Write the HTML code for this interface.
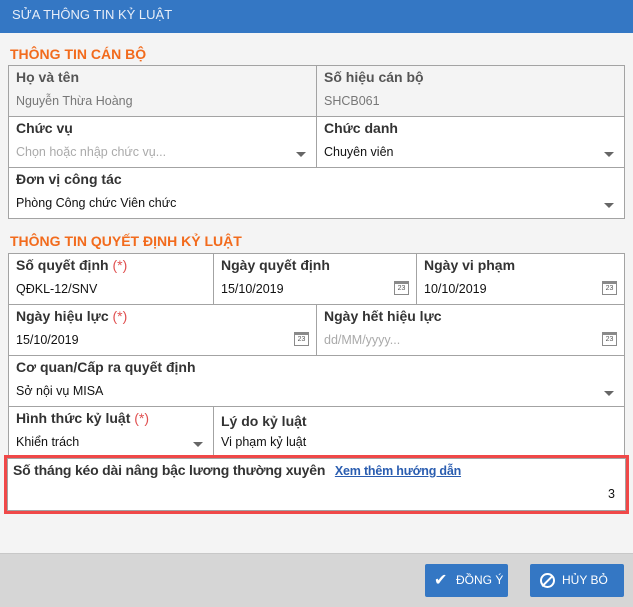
<!DOCTYPE html>
<html style="width:633px;height:607px;overflow:hidden"><head><meta charset="utf-8"><style>
*{box-sizing:border-box;margin:0;padding:0}
body{width:633px;height:607px;background:#f4f4f4;font-family:"Liberation Sans",Arial,sans-serif;position:relative;overflow:hidden;color:#222;white-space:nowrap}
.hd{position:absolute;left:0;top:0;width:633px;height:33px;background:#3477c4;color:#e8eef8;font-size:13px;line-height:30px;padding-left:12px}
.st{position:absolute;left:10px;color:#f26b1d;font-weight:bold;font-size:14px}
.c{position:absolute;border:1px solid #a3a3a3;background:#fff}
.c.g{background:#f4f4f4}
.l{position:absolute;left:7px;top:3px;font-weight:bold;font-size:14px;color:#333}
.v{position:absolute;left:7px;top:28px;font-size:12.5px;color:#111}
.g .l{color:#555}.g .v{color:#777}
.ph{color:#aaa!important}
.r{color:#e05050;font-weight:normal}
.ar{position:absolute;right:10px;top:35px;width:0;height:0;border-left:5px solid transparent;border-right:5px solid transparent;border-top:5px solid #666}
.cal{position:absolute;right:7px;top:27px;width:15px;height:14px;border:1px solid #8a8a8a;border-top:3px solid #8a8a8a;font-size:7px;color:#555;text-align:center;line-height:9px;background:#fff}
.ft{position:absolute;left:0;top:553px;width:633px;height:54px;background:#d6d6d6;border-top:1px solid #c8c8c8}
.b{position:absolute;top:564px;height:33px;background:#3477c4;color:#fff;font-size:12px;line-height:33px;border-radius:2px;overflow:hidden}
</style></head><body>
<div class="hd">SỬA THÔNG TIN KỶ LUẬT</div>
<div class="st" style="top:46px">THÔNG TIN CÁN BỘ</div>
<div class="c g" style="left:8px;top:65px;width:309px;height:52px"><div class="l">Họ và tên</div><div class="v">Nguyễn Thừa Hoàng</div></div>
<div class="c g" style="left:316px;top:65px;width:309px;height:52px"><div class="l">Số hiệu cán bộ</div><div class="v">SHCB061</div></div>
<div class="c" style="left:8px;top:116px;width:309px;height:52px"><div class="l">Chức vụ</div><div class="v ph">Chọn hoặc nhập chức vụ...</div><div class="ar"></div></div>
<div class="c" style="left:316px;top:116px;width:309px;height:52px"><div class="l">Chức danh</div><div class="v">Chuyên viên</div><div class="ar"></div></div>
<div class="c" style="left:8px;top:167px;width:617px;height:52px"><div class="l">Đơn vị công tác</div><div class="v">Phòng Công chức Viên chức</div><div class="ar"></div></div>
<div class="st" style="top:233px">THÔNG TIN QUYẾT ĐỊNH KỶ LUẬT</div>
<div class="c" style="left:8px;top:253px;width:206px;height:52px"><div class="l">Số quyết định <span class="r">(*)</span></div><div class="v">QĐKL-12/SNV</div></div>
<div class="c" style="left:213px;top:253px;width:204px;height:52px"><div class="l">Ngày quyết định</div><div class="v">15/10/2019</div><div class="cal">23</div></div>
<div class="c" style="left:416px;top:253px;width:209px;height:52px"><div class="l">Ngày vi phạm</div><div class="v">10/10/2019</div><div class="cal">23</div></div>
<div class="c" style="left:8px;top:304px;width:309px;height:52px"><div class="l">Ngày hiệu lực <span class="r">(*)</span></div><div class="v">15/10/2019</div><div class="cal">23</div></div>
<div class="c" style="left:316px;top:304px;width:309px;height:52px"><div class="l">Ngày hết hiệu lực</div><div class="v ph">dd/MM/yyyy...</div><div class="cal">23</div></div>
<div class="c" style="left:8px;top:355px;width:617px;height:52px"><div class="l">Cơ quan/Cấp ra quyết định</div><div class="v">Sở nội vụ MISA</div><div class="ar"></div></div>
<div class="c" style="left:8px;top:406px;width:206px;height:52px"><div class="l">Hình thức kỷ luật <span class="r">(*)</span></div><div class="v">Khiển trách</div><div class="ar"></div></div>
<div class="c" style="left:213px;top:406px;width:412px;height:52px"><div class="l" style="top:6px">Lý do kỷ luật</div><div class="v">Vi phạm kỷ luật</div></div>
<div style="position:absolute;left:4px;top:455px;width:625px;height:59px;border:3px solid #f04848"></div>
<div class="c" style="left:7px;top:458px;width:619px;height:53px"><div class="l" style="left:5px;letter-spacing:-0.2px">Số tháng kéo dài nâng bậc lương thường xuyên <a style="color:#2a5db0;font-size:12.5px;margin-left:6px;text-decoration:underline">Xem thêm hướng dẫn</a></div><div class="v" style="left:auto;right:10px">3</div></div>
<div class="ft"></div>
<div class="b" style="left:425px;width:83px"><span style="position:absolute;left:9px;top:0;font-size:16px">✔</span><span style="position:absolute;left:31px">ĐỒNG Ý</span></div>
<div class="b" style="left:530px;width:94px"><span style="position:absolute;left:10px;top:9px;width:15px;height:15px;border:2px solid #fff;border-radius:50%"></span><span style="position:absolute;left:10px;top:16px;width:15px;height:2px;background:#fff;transform:rotate(-45deg)"></span><span style="position:absolute;left:32px">HỦY BỎ</span></div>
</body></html>
